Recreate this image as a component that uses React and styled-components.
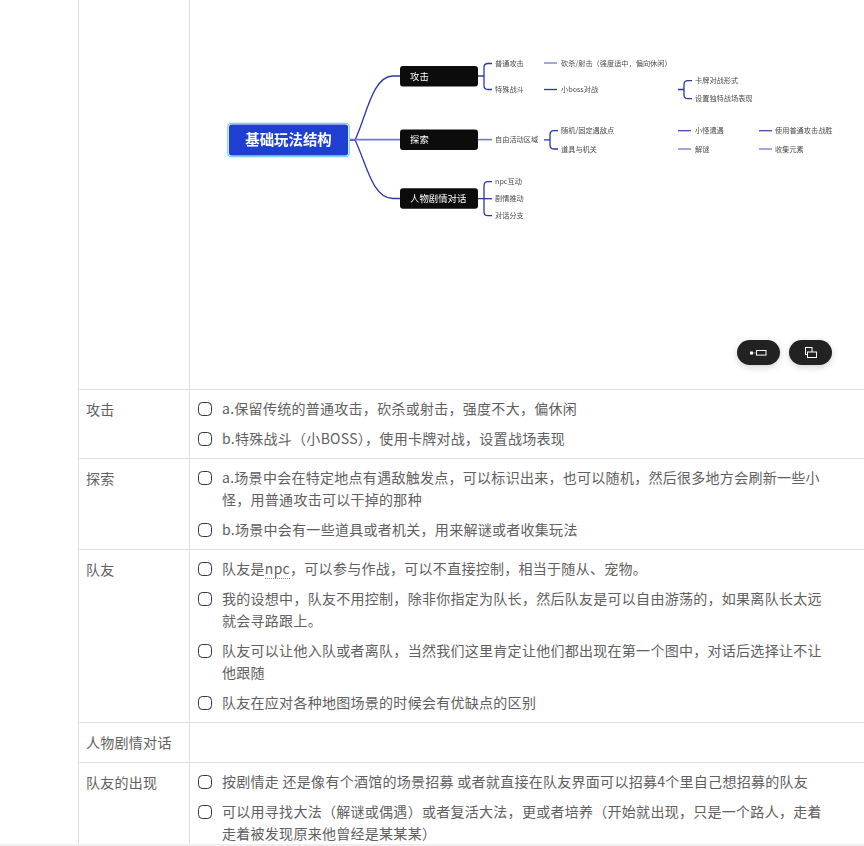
import React from 'react';
import styled, { createGlobalStyle } from 'styled-components';

const GlobalStyle = createGlobalStyle`
  html, body {
    margin: 0;
    padding: 0;
    background: #fff;
    overflow: hidden;
  }
  body {
    font-family: "Noto Sans CJK SC", "Noto Sans", sans-serif;
  }
`;

const Page = styled.div`
  position: relative;
  width: 864px;
  height: 846px;
  overflow: hidden;
  padding-left: 78px;
  box-sizing: border-box;
`;

const Table = styled.div`
  width: 900px;
  border-left: 1px solid #dedede;
`;

const Row = styled.div`
  display: grid;
  grid-template-columns: 110px 1fr;
  border-top: ${(p) => (p.$first ? 'none' : '1px solid #e2e2e2')};
  min-height: ${(p) => p.$minHeight || 0}px;
  box-sizing: border-box;
`;

const Label = styled.div`
  padding: 8px 7px;
  font-size: 14px;
  line-height: 22px;
  letter-spacing: 0.28px;
  color: #606060;
`;

const Cell = styled.div`
  position: relative;
  border-left: 1px solid #dedede;
  padding: 8px 8px;
  display: flex;
  flex-direction: column;
  gap: 8px;
`;

const Item = styled.div`
  display: flex;
  gap: 10px;
  width: 626px;
`;

const Box = styled.span`
  flex: none;
  width: 14px;
  height: 14px;
  margin-top: 4px;
  border: 1.5px solid #333;
  border-radius: 4.5px;
  box-sizing: border-box;
`;

const Text = styled.div`
  font-size: 14px;
  line-height: 22px;
  letter-spacing: 0.28px;
  color: #606060;
  margin: -1px 0 1px;
`;

const Dotted = styled.span`
  border-bottom: 1px dotted #888;
`;

const MapCell = styled.div`
  position: relative;
  border-left: 1px solid #dedede;
  height: 389px;
`;

const MapSvg = styled.svg`
  display: block;
  filter: blur(0.25px);
`;

const FloatButton = styled.button`
  position: absolute;
  top: 340px;
  left: ${(p) => p.$left}px;
  width: 43px;
  height: 25px;
  padding: 0;
  border: none;
  border-radius: 13px;
  background: #222;
  box-shadow: 0 2px 7px rgba(0, 0, 0, 0.18);
  display: flex;
  align-items: center;
  justify-content: center;
`;

const BottomLine = styled.div`
  position: absolute;
  left: 0;
  right: 0;
  bottom: 0;
  height: 2px;
  background: #efefef;
`;

const DARK = '#2a38a6';
const LIGHT = '#6f78d6';

function Node({ x, y, w, title }) {
  return (
    <g>
      <rect x={x} y={y} width={w} height="20.6" rx="3" fill="#0c0c0c" />
      <text x={x + 10} y={y + 13.8} fontSize="9.4" fill="#fff">{title}</text>
    </g>
  );
}

function Leaf({ x, y, children }) {
  return <text x={x} y={y + 2.6} fontSize="7.2" fill="#4a4a4a">{children}</text>;
}

function Bracket({ x, y1, y2, mid, color = DARK }) {
  return (
    <path
      d={`M${x} ${mid} H${x + 6} M${x + 14} ${y1} H${x + 10} Q${x + 6} ${y1} ${x + 6} ${y1 + 4} V${y2 - 4} Q${x + 6} ${y2} ${x + 10} ${y2} H${x + 14}`}
      fill="none"
      stroke={color}
      strokeWidth="1.3"
    />
  );
}

function Dash({ x, y, color = LIGHT }) {
  return <path d={`M${x} ${y} H${x + 13}`} stroke={color} strokeWidth="1.3" />;
}

// the mind map image, page coordinates shifted by the column start
function MindMap() {
  return (
    <MapSvg width="674" height="389" viewBox="190 0 674 389">
      <path d="M350 140 H355 C366 118 372 76 393 76 H400" fill="none" stroke={DARK} strokeWidth="1.3" />
      <path d="M350 140 H355 C366 162 372 198.5 393 198.5 H400" fill="none" stroke={DARK} strokeWidth="1.3" />
      <path d="M350 139.6 H400" stroke={LIGHT} strokeWidth="1.6" />

      <rect x="227.8" y="123.3" width="121.4" height="33.4" rx="3" fill="#fff" stroke="#55c4f4" strokeWidth="1" />
      <rect x="229" y="124.5" width="119" height="31" rx="2.5" fill="#1f3fd2" />
      <text x="288.5" y="144.8" fontSize="14.4" fontWeight="700" textAnchor="middle" fill="#fff">基础玩法结构</text>

      <Node x={400} y={66} w={78} title="攻击" />
      <Node x={400} y={129.4} w={78} title="探索" />
      <Node x={400} y={188.2} w={78} title="人物剧情对话" />

      <Bracket x={478} y1={63.5} y2={89.5} mid={76} />
      <Leaf x={495} y={63.5}>普通攻击</Leaf>
      <Leaf x={495} y={89.5}>特殊战斗</Leaf>

      <path d="M478 139.6 H492" stroke={LIGHT} strokeWidth="1.6" />
      <Leaf x={495} y={139.6}>自由活动区域</Leaf>

      <Bracket x={478} y1={181.7} y2={215.7} mid={198.7} />
      <path d="M484 198.7 H492" stroke={DARK} strokeWidth="1.3" />
      <Leaf x={495} y={181.7}>npc互动</Leaf>
      <Leaf x={495} y={198.7}>剧情推动</Leaf>
      <Leaf x={495} y={215.7}>对话分支</Leaf>

      <Dash x={544} y={63} />
      <Leaf x={561} y={63}>砍杀/射击（强度适中，偏向休闲）</Leaf>
      <Dash x={544} y={89.5} color={DARK} />
      <Leaf x={561} y={89.5}>小boss对战</Leaf>

      <Bracket x={678} y1={80.7} y2={98.7} mid={89.5} />
      <Leaf x={695} y={80.7}>卡牌对战形式</Leaf>
      <Leaf x={695} y={98.7}>设置独特战场表现</Leaf>

      <Bracket x={544} y1={130.7} y2={149} mid={139.8} />
      <Leaf x={561} y={130.7}>随机/固定遇敌点</Leaf>
      <Leaf x={561} y={149}>道具与机关</Leaf>

      <Dash x={678} y={130.7} color="#3f49b8" />
      <Leaf x={695} y={130.7}>小怪遭遇</Leaf>
      <Dash x={678} y={149} />
      <Leaf x={695} y={149}>解谜</Leaf>

      <Dash x={759} y={130.7} color="#3f49b8" />
      <Leaf x={775} y={130.7}>使用普通攻击战胜</Leaf>
      <Dash x={759} y={149} />
      <Leaf x={775} y={149}>收集元素</Leaf>
    </MapSvg>
  );
}

function LineIcon() {
  return (
    <svg width="17" height="6" viewBox="0 0 17 6" fill="none">
      <rect x="0" y="1.5" width="3" height="3" fill="#fff" />
      <path d="M3 3 H6.5" stroke="#aaa" strokeWidth="0.7" />
      <rect x="6.5" y="0.5" width="9.5" height="4.6" stroke="#fff" strokeWidth="1" />
    </svg>
  );
}

function TreeIcon() {
  return (
    <svg width="12" height="11" viewBox="0 0 12 11" fill="none" stroke="#fff" strokeWidth="1">
      <rect x="0.5" y="0.5" width="6.5" height="7" />
      <rect x="2.5" y="5" width="9" height="5.5" fill="#222" />
    </svg>
  );
}

function Check({ children }) {
  return (
    <Item>
      <Box />
      <Text>{children}</Text>
    </Item>
  );
}

export default function App() {
  return (
    <Page>
      <GlobalStyle />
      <Table>
        <Row $first>
          <Label />
          <MapCell>
            <MindMap />
          </MapCell>
        </Row>
        <Row>
          <Label>攻击</Label>
          <Cell>
            <Check>a.保留传统的普通攻击，砍杀或射击，强度不大，偏休闲</Check>
            <Check>b.特殊战斗（小BOSS），使用卡牌对战，设置战场表现</Check>
          </Cell>
        </Row>
        <Row>
          <Label>探索</Label>
          <Cell>
            <Check>a.场景中会在特定地点有遇敌触发点，可以标识出来，也可以随机，然后很多地方会刷新一些小怪，用普通攻击可以干掉的那种</Check>
            <Check>b.场景中会有一些道具或者机关，用来解谜或者收集玩法</Check>
          </Cell>
        </Row>
        <Row>
          <Label>队友</Label>
          <Cell>
            <Check>队友是<Dotted>npc</Dotted>，可以参与作战，可以不直接控制，相当于随从、宠物。</Check>
            <Check>我的设想中，队友不用控制，除非你指定为队长，然后队友是可以自由游荡的，如果离队长太远就会寻路跟上。</Check>
            <Check>队友可以让他入队或者离队，当然我们这里肯定让他们都出现在第一个图中，对话后选择让不让他跟随</Check>
            <Check>队友在应对各种地图场景的时候会有优缺点的区别</Check>
          </Cell>
        </Row>
        <Row $minHeight={40}>
          <Label>人物剧情对话</Label>
          <Cell />
        </Row>
        <Row>
          <Label>队友的出现</Label>
          <Cell>
            <Check>按剧情走 还是像有个酒馆的场景招募 或者就直接在队友界面可以招募4个里自己想招募的队友</Check>
            <Check>可以用寻找大法（解谜或偶遇）或者复活大法，更或者培养（开始就出现，只是一个路人，走着走着被发现原来他曾经是某某某）</Check>
          </Cell>
        </Row>
      </Table>
      <FloatButton $left={737}><LineIcon /></FloatButton>
      <FloatButton $left={789}><TreeIcon /></FloatButton>
      <BottomLine />
    </Page>
  );
}
